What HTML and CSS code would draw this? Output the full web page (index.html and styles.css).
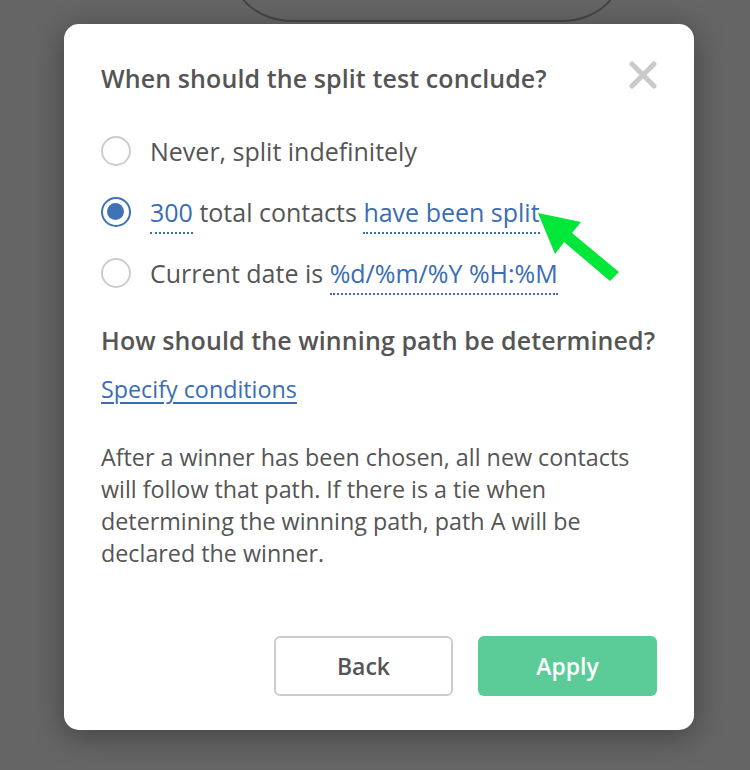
FILE: index.html
```html
<!DOCTYPE html>
<html>
<head>
<meta charset="utf-8">
<link rel="stylesheet" href="styles.css">
</head>
<body>
<div class="backdrop-shape"></div>
<div class="modal">
  <div class="head">
    <h2 class="title">When should the split test conclude?</h2>
    <svg class="close" width="28" height="28" viewBox="0 0 28 28"><path d="M3 3L25 25M25 3L3 25" stroke="#c9c9c9" stroke-width="5" stroke-linecap="round"/></svg>
  </div>
  <div class="options">
    <label class="opt"><span class="radio"></span><span>Never, split indefinitely</span></label>
    <label class="opt"><span class="radio checked"></span><span><span class="dlink">300</span> total contacts <span class="dlink">have been split</span></span></label>
    <label class="opt"><span class="radio"></span><span>Current date is <span class="dlink">%d/%m/%Y %H:%M</span></span></label>
  </div>
  <h2 class="title second">How should the winning path be determined?</h2>
  <a class="spec">Specify conditions</a>
  <p class="desc">After a winner has been chosen, all new contacts will follow that path. If there is a tie when determining the winning path, path A will be declared the winner.</p>
  <div class="actions">
    <button class="btn back">Back</button>
    <button class="btn apply">Apply</button>
  </div>
  <svg class="arrow" width="100" height="85" viewBox="0 0 100 85"><path d="M8 8 L51 17 L42 28 L89 67 L80 76 L34 37 L25 49 Z" fill="#00e639"/></svg>
</div>
</body>
</html>
```
FILE: styles.css
```css
html, body { margin: 0; padding: 0; }
body {
  background: #656565;
  font-family: "Open Sans", "DejaVu Sans", sans-serif;
  color: #555;
  width: 750px;
  height: 770px;
  overflow: hidden;
  position: relative;
  padding: 24px 0 0 64px;
  box-sizing: border-box;
}
.backdrop-shape {
  position: absolute;
  left: 232px;
  top: -120px;
  width: 390px;
  height: 142px;
  border: 2px solid #454545;
  border-radius: 0 0 60px 60px / 0 0 50px 50px;
  box-sizing: border-box;
}
.modal {
  position: relative;
  width: 630px;
  height: 706px;
  background: #fff;
  border-radius: 15px;
  box-shadow: 0 6px 30px rgba(0,0,0,0.35);
  box-sizing: border-box;
  padding: 37px 37px 0 37px;
  display: flex;
  flex-direction: column;
}
.head { display: flex; justify-content: space-between; align-items: center; }
.title {
  margin: 0;
  font-size: 25px;
  font-weight: 600;
  line-height: 34px;
  color: #555;
  letter-spacing: 0.1px;
}
.close { margin-top: -6px; flex: none; }
.options { display: flex; flex-direction: column; gap: 27px; margin-top: 39px; }
.opt { display: flex; align-items: center; gap: 19px; font-size: 25px; line-height: 34px; }
.radio {
  width: 30px; height: 30px; box-sizing: border-box;
  border: 2px solid #cdcdcd; border-radius: 50%;
  flex: none;
  position: relative;
}
.radio.checked { border: 2.5px solid #3f72b6; }
.radio.checked::after {
  content: ""; position: absolute; left: 4px; top: 4px; width: 17px; height: 17px;
  border-radius: 50%; background: #3f72b6;
}
.dlink {
  color: #3a6db3;
  border-bottom: 2px dotted #3a6db3;
  padding-bottom: 3px;
}
.second { margin-top: 33px; }
.spec {
  margin-top: 15px;
  font-size: 23.3px; line-height: 34px;
  color: #3a6db3; text-decoration: underline; text-underline-offset: 4px;
  text-decoration-thickness: 1.5px;
  align-self: flex-start;
}
.desc {
  margin: 35px 0 0 0;
  font-size: 23.3px; line-height: 32px; color: #555;
}
.actions {
  margin-top: auto;
  margin-bottom: 34px;
  display: flex; justify-content: flex-end; gap: 25px;
}
.btn {
  width: 179px; height: 60px; box-sizing: border-box;
  font-family: "Open Sans", sans-serif; font-size: 23px; font-weight: 600;
  border-radius: 6px; cursor: pointer;
}
.back { background: #fff; border: 2px solid #cccccc; color: #555; }
.apply { background: #5bcc98; border: none; color: #fff; }
.arrow { position: absolute; left: 466px; top: 181px; }
```
